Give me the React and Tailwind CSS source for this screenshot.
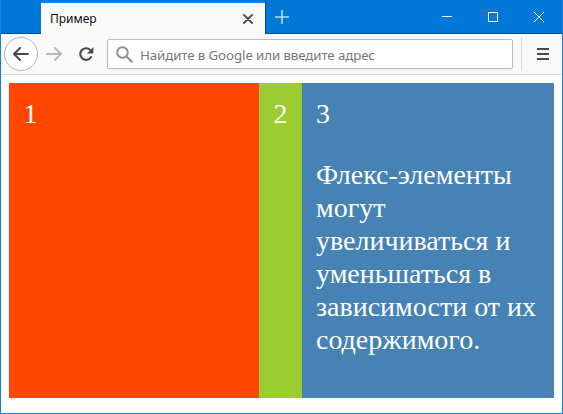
function TitleBar() {
  return (
    <header className="flex h-[34px] shrink-0 bg-[#0078d7]">
      <div className="h-full w-10 border-b border-[#0a4a90]" />
      <div className="flex h-full w-[224px] flex-col bg-[#f9f9fa]">
        <div className="h-px bg-[#0078d7]" />
        <div className="h-0.5 bg-[#0a84ff]" />
        <div className="flex flex-1 items-center pl-[9px] pr-3">
          <span className="flex-1 font-['Noto_Sans','Open_Sans',sans-serif] text-[12px] leading-4 text-[#0c0c0d]">
            Пример
          </span>
          <svg width="10" height="10" viewBox="0 0 10 10" className="shrink-0">
            <path d="M1 1l8 8M9 1L1 9" stroke="#4a4a4c" strokeWidth="1.8" strokeLinecap="round" />
          </svg>
        </div>
      </div>
      <div className="flex h-full flex-1 items-start border-b border-l border-[#0a4a90] pl-[9px] pr-[18px]">
        <svg width="14" height="14" viewBox="0 0 14 14" className="mt-[10px]">
          <path d="M7 0v14M0 7h14" stroke="#b3daf8" strokeWidth="1.6" />
        </svg>
        <div className="ml-auto mt-3 flex gap-9">
          <svg width="10" height="10" viewBox="0 0 10 10" shapeRendering="crispEdges">
            <path d="M0 4.5h10" stroke="#fff" />
          </svg>
          <svg width="10" height="10" viewBox="0 0 10 10" fill="none" shapeRendering="crispEdges">
            <rect x="0.5" y="0.5" width="9" height="9" stroke="#fff" />
          </svg>
          <svg width="10" height="10" viewBox="0 0 10 10">
            <path d="M0 0l10 10M10 0L0 10" stroke="#fff" />
          </svg>
        </div>
      </div>
    </header>
  );
}

function Toolbar() {
  return (
    <div className="flex h-[41px] shrink-0 items-center border-b border-[#dcdcdc] bg-[#f9f9fa] pl-[3px] pr-[13px]">
      <div className="flex size-[34px] shrink-0 items-center justify-center rounded-full border border-[#b5b5b5] bg-white">
        <svg width="16" height="14" viewBox="0 0 16 14" fill="none" stroke="#4a4a4c" strokeWidth="2" strokeLinecap="round" strokeLinejoin="round">
          <path d="M15 7H1.5M7 1L1 7l6 6" />
        </svg>
      </div>
      <svg width="16" height="14" viewBox="0 0 16 14" fill="none" stroke="#b8b8b8" strokeWidth="2" strokeLinecap="round" strokeLinejoin="round" className="ml-2 shrink-0">
        <path d="M1 7h13.5M9 1l6 6-6 6" />
      </svg>
      <svg width="16" height="16" viewBox="0 0 16 16" className="ml-4 shrink-0">
        <path d="M13 11A5.8 5.8 0 1 1 12.2 4" fill="none" stroke="#4a4a4c" strokeWidth="2.1" strokeLinecap="round" />
        <path d="M15.4 1v6.5H9z" fill="#4a4a4c" />
      </svg>
      <div className="ml-[13px] flex h-[30px] w-[406px] shrink-0 items-center rounded-[2px] border border-[#bcbcbc] bg-white pl-2 shadow-[0_1px_3px_rgba(0,0,0,0.06)]">
        <svg width="17" height="17" viewBox="0 0 17 17" fill="none" stroke="#929292" className="shrink-0">
          <circle cx="6.5" cy="6.5" r="5.3" strokeWidth="2" />
          <path d="M10.5 10.5l5.2 5.2" strokeWidth="2.2" strokeLinecap="round" />
        </svg>
        <span className="ml-[7px] whitespace-nowrap pt-px font-['Noto_Sans','Open_Sans',sans-serif] text-[13.3px] leading-5 tracking-[-0.11px] text-[#777]">
          Найдите в Google или введите адрес
        </span>
      </div>
      <div className="ml-2 h-[34px] w-px bg-[#dcdcdc]" />
      <svg width="12" height="12" viewBox="0 0 12 12" className="ml-auto" shapeRendering="crispEdges">
        <path d="M0 1h12M0 6h12M0 11h12" stroke="#4a4a4c" strokeWidth="2" />
      </svg>
    </div>
  );
}

export default function App() {
  return (
    <div className="flex h-[414px] w-[563px] flex-col overflow-hidden border-x border-b border-[#1a7fd4] bg-white">
      <TitleBar />
      <Toolbar />
      <main className="mx-2 mt-2 flex h-[315px] font-['Liberation_Serif',serif] text-[28px] leading-[33px] text-white">
        <section className="w-[250px] bg-[#ff4500] px-[14.4px] py-3.5">1</section>
        <section className="w-[43px] bg-[#9acd32] px-[14.4px] py-3.5">2</section>
        <section className="flex-1 bg-[#4682b4] px-3.5 py-3.5">
          3
          <p className="mt-7">
            Флекс-элементы могут увеличиваться и уменьшаться в зависимости от их содержимого.
          </p>
        </section>
      </main>
    </div>
  );
}
